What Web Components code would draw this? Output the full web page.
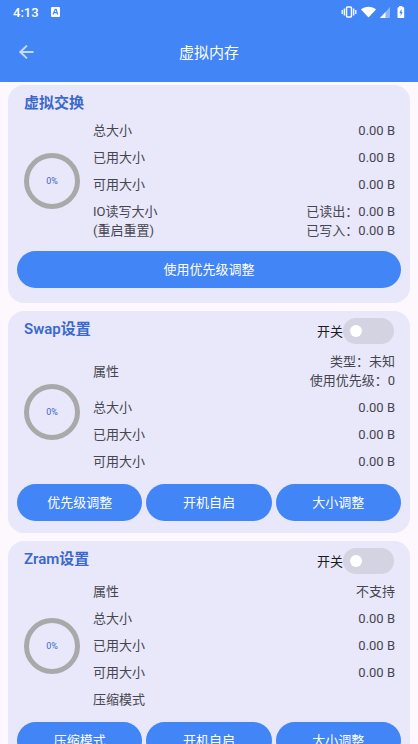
<!DOCTYPE html>
<html lang="zh-CN">
<head>
<meta charset="utf-8">
<meta name="viewport" content="width=device-width, initial-scale=1">
<title>虚拟内存</title>
<style>
  :root {
    --primary: #4285f6;
    --title: #3b68cc;
    --surface: #fdf7fe;
    --card: #e8e8fa;
    --text: #47464f;
    --ring: #a9a9a9;
  }

  body {
    margin: 0;
    background: var(--surface);
    color: var(--text);
    font: 13px/19px Roboto, "Noto Sans CJK SC", sans-serif;
  }
</style>
</head>
<body>
<memory-app>
  <status-bar slot="top" time="4:13"></status-bar>
  <app-bar slot="top">虚拟内存</app-bar>

  <memory-card heading="虚拟交换">
    <info-row><span>总大小</span><span slot="value">0.00 B</span></info-row>
    <info-row><span>已用大小</span><span slot="value">0.00 B</span></info-row>
    <info-row><span>可用大小</span><span slot="value">0.00 B</span></info-row>
    <info-row>
      <span>IO读写大小<br>(重启重置)</span>
      <span slot="value">已读出：0.00 B<br>已写入：0.00 B</span>
    </info-row>
    <button-group slot="actions" single>
      <pill-button>使用优先级调整</pill-button>
    </button-group>
  </memory-card>

  <memory-card heading="Swap设置">
    <toggle-switch slot="switch">开关</toggle-switch>
    <info-row>
      <span>属性</span>
      <span slot="value">类型：未知<br>使用优先级：0</span>
    </info-row>
    <info-row><span>总大小</span><span slot="value">0.00 B</span></info-row>
    <info-row><span>已用大小</span><span slot="value">0.00 B</span></info-row>
    <info-row><span>可用大小</span><span slot="value">0.00 B</span></info-row>
    <button-group slot="actions">
      <pill-button>优先级调整</pill-button>
      <pill-button>开机自启</pill-button>
      <pill-button>大小调整</pill-button>
    </button-group>
  </memory-card>

  <memory-card heading="Zram设置">
    <toggle-switch slot="switch">开关</toggle-switch>
    <info-row><span>属性</span><span slot="value">不支持</span></info-row>
    <info-row><span>总大小</span><span slot="value">0.00 B</span></info-row>
    <info-row><span>已用大小</span><span slot="value">0.00 B</span></info-row>
    <info-row><span>可用大小</span><span slot="value">0.00 B</span></info-row>
    <info-row><span>压缩模式</span></info-row>
    <button-group slot="actions">
      <pill-button>压缩模式</pill-button>
      <pill-button>开机自启</pill-button>
      <pill-button>大小调整</pill-button>
    </button-group>
  </memory-card>
</memory-app>

<script>
// Base class: every element renders its template into an open shadow root
class BaseElement extends HTMLElement {
  constructor() {
    super();
    this.attachShadow({ mode: "open" });
  }

  connectedCallback() {
    const template = document.createElement("template");
    template.innerHTML = this.getTemplate();
    this.shadowRoot.replaceChildren(template.content.cloneNode(true));
  }
}

// Fixed top area and the scrolling list of cards
class MemoryApp extends BaseElement {
  getTemplate() {
    return `
      <style>
        :host {
          display: flex;
          flex-direction: column;
          height: 100vh;
        }
        header {
          flex: none;
          background: var(--primary);
          color: #fff;
        }
        main {
          flex: 1;
          min-height: 0;
          display: flex;
          flex-direction: column;
          gap: 8px;
          padding: 3px 8px 8px;
          overflow-y: auto;
          scrollbar-width: none;
        }
      </style>
      <header><slot name="top"></slot></header>
      <main><slot></slot></main>
    `;
  }
}

class StatusBar extends BaseElement {
  getTemplate() {
    return `
      <style>
        :host {
          display: flex;
          align-items: center;
          height: 24px;
          padding: 0 13px;
          font-weight: 500;
        }
        .note { margin-left: 12px; }
        .icons {
          display: flex;
          align-items: center;
          gap: 4px;
          margin-left: auto;
        }
        svg { display: block; }
        .battery { margin-left: 3px; }
      </style>
      <span>${this.getAttribute("time")}</span>
      <svg class="note" width="9" height="10" viewBox="0 0 9 10">
        <rect width="9" height="10" rx="1" fill="#fff"/>
        <path d="M2 7.5 4.3 2.3 5.2 2.3 6.6 7.5M3 5.6H6" fill="none" stroke="#4285f6" stroke-width="1.2"/>
      </svg>
      <div class="icons">
        <svg width="16" height="12" viewBox="0 0 16 12" fill="none" stroke="#fff">
          <rect x="5.500" y="1" width="5" height="10" rx="1" stroke-width="1.5"/>
          <path d="M3.300 2.5V9.5M12.700 2.5V9.5" stroke-width="1.3"/>
          <path d="M1.200 4V8M14.800 4V8" stroke-width="1.3"/>
        </svg>
        <svg width="15" height="12" viewBox="0 0 15 12">
          <path d="M0 3.600C4 -.2 11 -.2 15 3.600L7.500 11.500Z" fill="#fff"/>
        </svg>
        <svg width="10" height="12" viewBox="0 0 10 12">
          <path d="M10 1V12H0Z" fill="#fff" opacity=".4"/>
          <path d="M5.500 6V12H0Z" fill="#fff"/>
        </svg>
        <svg class="battery" width="8" height="12" viewBox="0 0 8 12">
          <path d="M2.200 0H5.400V1.200H6.500Q7.200 1.200 7.200 2V11.200Q7.200 12 6.500 12H1.200Q.5 12 .5 11.200V2Q.5 1.200 1.200 1.200H2.200Z" fill="#fff"/>
          <path d="M4.500 3 2.300 7H3.600V10L5.600 6H4.500Z" fill="#4285f6"/>
        </svg>
      </div>
    `;
  }
}

class AppBar extends BaseElement {
  getTemplate() {
    return `
      <style>
        :host {
          display: grid;
          grid-template-columns: 36px 1fr 36px;
          align-items: center;
          height: 58px;
          padding: 0 8px;
        }
        button {
          display: grid;
          place-items: center;
          width: 36px;
          height: 36px;
          padding: 0;
          border: 0;
          background: none;
          color: #c5daff;
        }
        h1 {
          margin: 0;
          font-size: 15px;
          line-height: 19px;
          font-weight: 400;
          text-align: center;
        }
      </style>
      <button type="button" aria-label="返回">
        <svg width="16" height="16" viewBox="0 0 16 16" fill="none" stroke="currentColor" stroke-width="2">
          <path d="M15.500 7H2.300M9 .6 2.300 7 9 13.400"/>
        </svg>
      </button>
      <h1><slot></slot></h1>
    `;
  }
}

class MemoryCard extends BaseElement {
  getTemplate() {
    return `
      <style>
        :host {
          display: block;
          flex: none;
          padding: 7px 9px 0;
          border-radius: 16px;
          background: var(--card);
        }
        .head {
          display: flex;
          justify-content: space-between;
          align-items: flex-start;
          padding: 0 7px 4px;
        }
        h2 {
          margin: 0;
          padding-top: 2px;
          color: var(--title);
          font-size: 15px;
          line-height: 19px;
          font-weight: 600;
        }
        .body {
          display: flex;
          align-items: center;
          gap: 13px;
          padding: 0 6px 0 7px;
        }
        .rows { flex: 1; }
      </style>
      <div class="head">
        <h2>${this.getAttribute("heading")}</h2>
        <slot name="switch"></slot>
      </div>
      <div class="body">
        <usage-ring>0%</usage-ring>
        <div class="rows"><slot></slot></div>
      </div>
      <slot name="actions"></slot>
    `;
  }
}

class UsageRing extends BaseElement {
  getTemplate() {
    return `
      <style>
        :host {
          display: grid;
          place-items: center;
          flex: none;
          box-sizing: border-box;
          width: 56px;
          height: 56px;
          border: 5px solid var(--ring);
          border-radius: 50%;
          color: var(--title);
          font-size: 9px;
          line-height: 12px;
        }
      </style>
      <span><slot></slot></span>
    `;
  }
}

// Label on the left, value on the right
class InfoRow extends BaseElement {
  getTemplate() {
    return `
      <style>
        :host {
          display: flex;
          justify-content: space-between;
          align-items: center;
          padding: 4px 0;
        }
        ::slotted([slot="value"]) { text-align: right; }
      </style>
      <slot></slot>
      <slot name="value"></slot>
    `;
  }
}

class ToggleSwitch extends BaseElement {
  getTemplate() {
    return `
      <style>
        label {
          display: flex;
          align-items: center;
          color: #1c1b22;
        }
        input {
          appearance: none;
          display: flex;
          align-items: center;
          box-sizing: border-box;
          width: 51px;
          height: 26px;
          margin: 0;
          padding: 0 7px;
          border-radius: 13px;
          background: #d4d3e2;
        }
        input::before {
          content: "";
          width: 12px;
          height: 12px;
          border-radius: 50%;
          background: #fff;
        }
        input:checked {
          justify-content: flex-end;
          background: var(--primary);
        }
      </style>
      <label><slot></slot><input type="checkbox" role="switch"></label>
    `;
  }
}

class ButtonGroup extends BaseElement {
  getTemplate() {
    return `
      <style>
        :host {
          display: flex;
          gap: 4px;
          padding: 9px 0 12px;
        }
        :host([single]) { padding: 7px 0 15px; }
      </style>
      <slot></slot>
    `;
  }
}

class PillButton extends BaseElement {
  getTemplate() {
    return `
      <style>
        :host {
          display: block;
          flex: 1;
        }
        button {
          display: block;
          width: 100%;
          height: 37px;
          padding: 0;
          border: 0;
          border-radius: 19px;
          background: var(--primary);
          color: #fff;
          font: inherit;
        }
      </style>
      <button type="button"><slot></slot></button>
    `;
  }
}

customElements.define("memory-app", MemoryApp);
customElements.define("status-bar", StatusBar);
customElements.define("app-bar", AppBar);
customElements.define("memory-card", MemoryCard);
customElements.define("usage-ring", UsageRing);
customElements.define("info-row", InfoRow);
customElements.define("toggle-switch", ToggleSwitch);
customElements.define("button-group", ButtonGroup);
customElements.define("pill-button", PillButton);
</script>
</body>
</html>
